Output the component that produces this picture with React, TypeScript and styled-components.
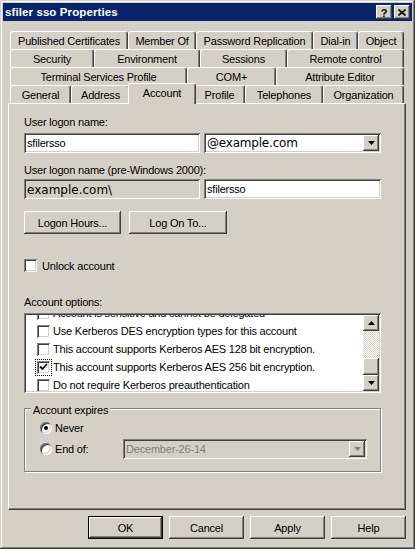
import React from 'react';
import styled, { createGlobalStyle, css } from 'styled-components';

const face = '#d4d0c8';
const shadow = '#808080';
const dark = '#404040';

const GlobalStyle = createGlobalStyle`
  html, body {
    margin: 0;
    padding: 0;
    background: ${face};
  }
  body {
    font-family: "Liberation Sans", Arial, sans-serif;
    font-size: 11px;
    letter-spacing: -0.2px;
    color: #000;
  }
  * {
    box-sizing: border-box;
  }
`;

const raised = css`
  background: ${face};
  box-shadow: inset -1px -1px ${dark}, inset 1px 1px #fff, inset -2px -2px ${shadow}, inset 2px 2px ${face};
`;

const sunken = css`
  box-shadow: inset 1px 1px ${shadow}, inset -1px -1px #fff, inset 2px 2px ${dark}, inset -2px -2px ${face};
`;

const Window = styled.div`
  width: 415px;
  height: 549px;
  padding: 3px;
  background: ${face};
  box-shadow: inset -1px -1px ${dark}, inset 1px 1px ${face}, inset -2px -2px ${shadow}, inset 2px 2px #fff;
  display: flex;
  flex-direction: column;
`;

const TitleBar = styled.div`
  height: 18px;
  background: #0a246a;
  display: flex;
  align-items: center;
  padding: 0 2px 0 2px;
`;

const Title = styled.div`
  flex: 1;
  color: #fff;
  font-weight: bold;
  font-size: 11.5px;
  letter-spacing: 0.1px;
`;

const CaptionButton = styled.div`
  ${raised};
  width: 16px;
  height: 14px;
  display: flex;
  align-items: center;
  justify-content: center;
  margin-left: 2px;
  font-weight: bold;
  font-size: 11px;
  padding-top: 1px;
`;

const Body = styled.div`
  width: 398px;
  margin: 10px 0 0 5px;
  display: flex;
  flex-direction: column;
`;

const TabStrip = styled.div`
  display: flex;
  flex-direction: column;
`;

const TabRow = styled.div`
  display: flex;
  padding: 0 2px;
  height: 18px;
`;

const Tab = styled.div<{ $w: number; $active?: boolean }>`
  width: ${p => p.$w}px;
  height: 18px;
  flex: none;
  display: flex;
  align-items: center;
  justify-content: center;
  background: ${face};
  border-top: 1px solid #fff;
  border-left: 1px solid #fff;
  border-right: 1px solid ${dark};
  border-radius: 3px 3px 0 0;
  box-shadow: inset -1px 0 ${shadow};
  padding-top: 1px;
  white-space: nowrap;
  ${p =>
    p.$active &&
    css`
      width: ${p.$w + 4}px;
      height: 21px;
      margin: -2px -2px -1px;
      position: relative;
      z-index: 1;
      padding: 0 0 3px;
    `}
`;

const Panel = styled.div`
  height: 407px;
  border-style: solid;
  border-width: 1px;
  border-color: #fff ${dark} ${dark} #fff;
  box-shadow: inset -1px -1px ${shadow};
  padding: 11px 0 0 15px;
  display: flex;
  flex-direction: column;
`;

const Label = styled.div<{ $mt?: number }>`
  line-height: 14px;
  height: 14px;
  margin-top: ${p => p.$mt ?? 0}px;
`;

const FieldRow = styled.div<{ $mt: number }>`
  display: flex;
  gap: 4px;
  margin-top: ${p => p.$mt}px;
`;

const TextBox = styled.div<{ $w: number; $grey?: boolean; $big?: boolean }>`
  ${sunken};
  width: ${p => p.$w}px;
  height: 20px;
  background: ${p => (p.$grey ? face : '#fff')};
  display: flex;
  align-items: center;
  padding: 0 3px;
  white-space: nowrap;
  ${p =>
    p.$big &&
    css`
      font-family: "DejaVu Sans", Verdana, sans-serif;
      font-size: 12px;
      letter-spacing: 0;
      padding-top: 1px;
    `}
`;

const Combo = styled.div<{ $w: number; $disabled?: boolean; $big?: boolean }>`
  ${sunken};
  width: ${p => p.$w}px;
  height: 20px;
  background: ${p => (p.$disabled ? face : '#fff')};
  color: ${p => (p.$disabled ? shadow : '#000')};
  display: flex;
  align-items: center;
  padding: 2px 2px 2px 3px;
  ${p =>
    p.$big &&
    css`
      font-family: "DejaVu Sans", Verdana, sans-serif;
      font-size: 12px;
      letter-spacing: -0.2px;
    `}
`;

const ComboText = styled.div`
  flex: 1;
  white-space: nowrap;
`;

const ArrowButton = styled.div`
  ${raised};
  width: 16px;
  height: 16px;
  flex: none;
  display: flex;
  align-items: center;
  justify-content: center;
`;

const ButtonRow = styled.div<{ $mt: number; $end?: boolean }>`
  display: flex;
  gap: ${p => (p.$end ? 6 : 8)}px;
  margin-top: ${p => p.$mt}px;
  justify-content: ${p => (p.$end ? 'flex-end' : 'flex-start')};
`;

const Button = styled.div<{ $w: number; $default?: boolean }>`
  ${raised};
  width: ${p => p.$w}px;
  height: 23px;
  display: flex;
  align-items: center;
  justify-content: center;
  ${p =>
    p.$default &&
    css`
      box-shadow: inset 0 0 0 1px #000, inset -2px -2px ${dark}, inset 2px 2px #fff, inset -3px -3px ${shadow};
    `}
`;

const CheckRow = styled.div<{ $mt?: number }>`
  display: flex;
  align-items: center;
  gap: 5px;
  height: 13px;
  margin-top: ${p => p.$mt ?? 0}px;
  white-space: nowrap;
`;

const Box = styled.div<{ $focus?: boolean }>`
  ${sunken};
  width: 13px;
  height: 13px;
  background: #fff;
  flex: none;
  display: flex;
  align-items: center;
  justify-content: center;
  ${p =>
    p.$focus &&
    css`
      outline: 1px dotted #000;
      outline-offset: 1px;
    `}
`;

const ListBox = styled.div`
  ${sunken};
  width: 357px;
  height: 80px;
  margin-top: 4px;
  background: #fff;
  padding: 2px;
  display: flex;
`;

const ListView = styled.div`
  flex: 1;
  overflow: hidden;
`;

const ListItems = styled.div<{ $offset: number }>`
  margin-top: ${p => -p.$offset}px;
  display: flex;
  flex-direction: column;
`;

const ListItem = styled.div`
  height: 18px;
  display: flex;
  align-items: center;
  gap: 3px;
  padding-left: 11px;
  white-space: nowrap;
`;

const ScrollBar = styled.div`
  width: 16px;
  display: flex;
  flex-direction: column;
`;

const Track = styled.div`
  flex: 1;
  background: repeating-conic-gradient(#fff 0 25%, ${face} 0 50%) 0 0 / 2px 2px;
`;

const Thumb = styled.div`
  ${raised};
  height: 17px;
`;

const Group = styled.div`
  position: relative;
  width: 357px;
  height: 64px;
  margin-top: 15px;
  border: 1px solid ${shadow};
  box-shadow: 1px 1px 0 #fff, inset 1px 1px 0 #fff;
  padding: 12px 0 0 15px;
  display: flex;
  flex-direction: column;
`;

const Legend = styled.div`
  position: absolute;
  top: -6px;
  left: 6px;
  padding: 0 2px;
  line-height: 14px;
  background: ${face};
`;

const RadioRow = styled.div<{ $h: number; $mt?: number }>`
  display: flex;
  align-items: center;
  height: ${p => p.$h}px;
  margin-top: ${p => p.$mt ?? 0}px;
`;

const Radio = styled.div<{ $on?: boolean }>`
  width: 12px;
  height: 12px;
  border-radius: 50%;
  background: #fff;
  flex: none;
  box-shadow: inset 1px 1px ${shadow}, inset -1px -1px #fff, inset 2px 2px ${dark}, inset -2px -2px ${face};
  display: flex;
  align-items: center;
  justify-content: center;
  &::after {
    content: '';
    width: 4px;
    height: 4px;
    border-radius: 50%;
    background: ${p => (p.$on ? '#000' : 'transparent')};
  }
`;

const RadioLabel = styled.div<{ $w?: number }>`
  margin-left: 3px;
  width: ${p => (p.$w ? `${p.$w}px` : 'auto')};
`;

const DownArrow = ({ color = '#000' }: { color?: string }) => (
  <svg width="7" height="4" viewBox="0 0 7 4">
    <path d="M0 0h7L3.5 4z" fill={color} />
  </svg>
);

const UpArrow = () => (
  <svg width="7" height="4" viewBox="0 0 7 4">
    <path d="M0 4h7L3.5 0z" fill="#000" />
  </svg>
);

const Check = () => (
  <svg width="9" height="9" viewBox="0 0 9 9">
    <path d="M1 3.5l2.5 2.5 4.5-5" stroke="#000" strokeWidth="1.8" fill="none" />
  </svg>
);

const tabRows: Array<Array<{ label: string; w: number; active?: boolean }>> = [
  [
    { label: 'Published Certificates', w: 118 },
    { label: 'Member Of', w: 68 },
    { label: 'Password Replication', w: 117 },
    { label: 'Dial-in', w: 45 },
    { label: 'Object', w: 46 },
  ],
  [
    { label: 'Security', w: 84 },
    { label: 'Environment', w: 106 },
    { label: 'Sessions', w: 87 },
    { label: 'Remote control', w: 117 },
  ],
  [
    { label: 'Terminal Services Profile', w: 177 },
    { label: 'COM+', w: 89 },
    { label: 'Attribute Editor', w: 128 },
  ],
  [
    { label: 'General', w: 61 },
    { label: 'Address', w: 59 },
    { label: 'Account', w: 64, active: true },
    { label: 'Profile', w: 51 },
    { label: 'Telephones', w: 78 },
    { label: 'Organization', w: 81 },
  ],
];

const accountOptions = [
  { label: 'Account is sensitive and cannot be delegated', checked: false },
  { label: 'Use Kerberos DES encryption types for this account', checked: false },
  { label: 'This account supports Kerberos AES 128 bit encryption.', checked: false },
  { label: 'This account supports Kerberos AES 256 bit encryption.', checked: true },
  { label: 'Do not require Kerberos preauthentication', checked: false },
];

const App: React.FC = () => {
  return (
    <Window>
      <GlobalStyle />
      <TitleBar>
        <Title>sfiler sso Properties</Title>
        <CaptionButton>?</CaptionButton>
        <CaptionButton>
          <svg width="8" height="7" viewBox="0 0 8 7">
            <path d="M0.5 0.5l7 6M7.5 0.5l-7 6" stroke="#000" strokeWidth="1.6" />
          </svg>
        </CaptionButton>
      </TitleBar>
      <Body>
        <TabStrip>
          {tabRows.map((row, i) => (
            <TabRow key={i}>
              {row.map(tab => (
                <Tab key={tab.label} $w={tab.w} $active={tab.active}>
                  {tab.label}
                </Tab>
              ))}
            </TabRow>
          ))}
        </TabStrip>
        <Panel>
          <Label>User logon name:</Label>
          <FieldRow $mt={4}>
            <TextBox $w={176}>sfilersso</TextBox>
            <Combo $w={177} $big>
              <ComboText>@example.com</ComboText>
              <ArrowButton>
                <DownArrow />
              </ArrowButton>
            </Combo>
          </FieldRow>
          <Label $mt={10}>User logon name (pre-Windows 2000):</Label>
          <FieldRow $mt={2}>
            <TextBox $w={176} $grey $big>example.com\</TextBox>
            <TextBox $w={177}>sfilersso</TextBox>
          </FieldRow>
          <ButtonRow $mt={12}>
            <Button $w={97}>Logon Hours...</Button>
            <Button $w={98}>Log On To...</Button>
          </ButtonRow>
          <CheckRow $mt={25}>
            <Box />
            Unlock account
          </CheckRow>
          <Label $mt={23}>Account options:</Label>
          <ListBox>
            <ListView>
              <ListItems $offset={11}>
                {accountOptions.map(opt => (
                  <ListItem key={opt.label}>
                    <Box $focus={opt.checked}>{opt.checked && <Check />}</Box>
                    {opt.label}
                  </ListItem>
                ))}
              </ListItems>
            </ListView>
            <ScrollBar>
              <ArrowButton>
                <UpArrow />
              </ArrowButton>
              <Track />
              <Thumb />
              <ArrowButton>
                <DownArrow />
              </ArrowButton>
            </ScrollBar>
          </ListBox>
          <Group>
            <Legend>Account expires</Legend>
            <RadioRow $h={14}>
              <Radio $on />
              <RadioLabel>Never</RadioLabel>
            </RadioRow>
            <RadioRow $h={20} $mt={4}>
              <Radio />
              <RadioLabel $w={68}>End of:</RadioLabel>
              <Combo $w={244} $disabled>
                <ComboText>December-26-14</ComboText>
                <ArrowButton>
                  <DownArrow color={shadow} />
                </ArrowButton>
              </Combo>
            </RadioRow>
          </Group>
        </Panel>
        <ButtonRow $mt={6} $end>
          <Button $w={75} $default>OK</Button>
          <Button $w={75}>Cancel</Button>
          <Button $w={75}>Apply</Button>
          <Button $w={75}>Help</Button>
        </ButtonRow>
      </Body>
    </Window>
  );
};

export default App;
